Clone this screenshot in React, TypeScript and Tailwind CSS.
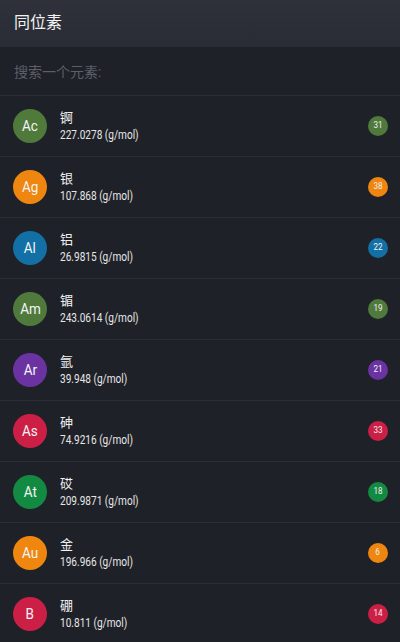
const elements = [
  { sym: 'Ac', name: '锕', mass: '227.0278', iso: 31, color: 'bg-[#4f7a3c]' },
  { sym: 'Ag', name: '银', mass: '107.868', iso: 38, color: 'bg-[#ee860f]' },
  { sym: 'Al', name: '铝', mass: '26.9815', iso: 22, color: 'bg-[#1270a6]' },
  { sym: 'Am', name: '镅', mass: '243.0614', iso: 19, color: 'bg-[#4f7a3c]' },
  { sym: 'Ar', name: '氩', mass: '39.948', iso: 21, color: 'bg-[#6b32a2]' },
  { sym: 'As', name: '砷', mass: '74.9216', iso: 33, color: 'bg-[#cc1f45]' },
  { sym: 'At', name: '砹', mass: '209.9871', iso: 18, color: 'bg-[#138a42]' },
  { sym: 'Au', name: '金', mass: '196.966', iso: 6, color: 'bg-[#ee860f]' },
  { sym: 'B', name: '硼', mass: '10.811', iso: 14, color: 'bg-[#cc1f45]' },
];

const App = () => {
  return (
    <div className="h-[642px] w-[400px] overflow-hidden bg-[#1f2128] font-['Roboto','Noto_Sans_CJK_SC',sans-serif] text-white">
      <div className="flex h-[47px] items-center bg-gradient-to-b from-[#2e3139] to-[#292c34] px-[14px] pb-[1px] text-[16px] text-[#f2f2f2]">
        同位素
      </div>
      <div className="flex h-[49px] items-center border-b border-[#2b2e36] px-[14px] pt-[3px] text-[14px] text-[#5c5f67]">
        搜索一个元素:
      </div>
      {elements.map((el) => (
        <div
          key={el.sym}
          className="flex h-[61px] items-center border-b border-[#2b2e36] pl-[13px] pr-[12px]"
        >
          <div
            className={`flex h-[34px] w-[34px] shrink-0 items-center justify-center rounded-full text-[15px] text-[#f4f4f4] ${el.color}`}
          >
            <span className="inline-block scale-x-[0.9]">{el.sym}</span>
          </div>
          <div className="ml-[13px] flex flex-1 flex-col items-start leading-none">
            <span className="text-[13px] text-[#f0f0f0]">{el.name}</span>
            <span className="mt-[5px] inline-block origin-left scale-x-[0.84] whitespace-nowrap text-[12px] text-[#e6e6e6]">
              {el.mass} (g/mol)
            </span>
          </div>
          <div
            className={`flex h-[20px] w-[20px] items-center justify-center rounded-full text-[9px] text-[#f0f0f0] ${el.color}`}
          >
            <span className="inline-block scale-x-[0.9]">{el.iso}</span>
          </div>
        </div>
      ))}
    </div>
  );
};

export default App;
